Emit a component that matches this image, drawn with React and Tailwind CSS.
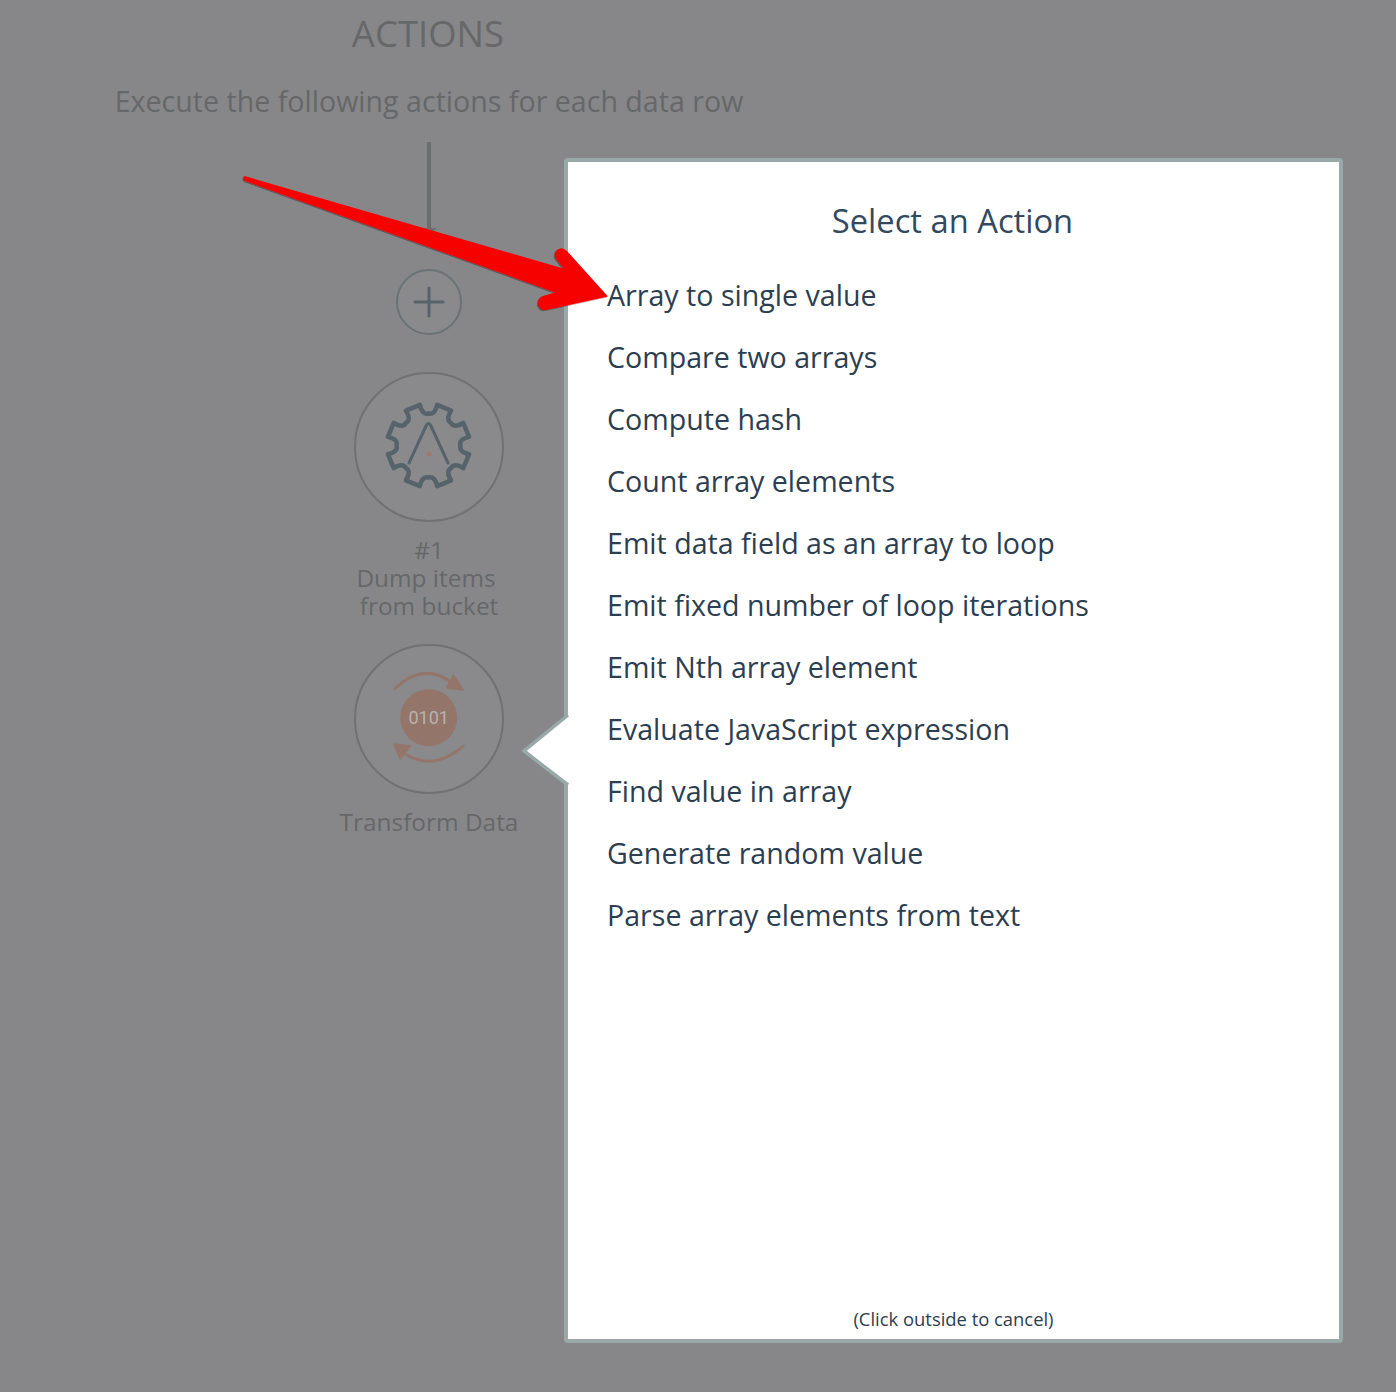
const actions = [
  'Array to single value',
  'Compare two arrays',
  'Compute hash',
  'Count array elements',
  'Emit data field as an array to loop',
  'Emit fixed number of loop iterations',
  'Emit Nth array element',
  'Evaluate JavaScript expression',
  'Find value in array',
  'Generate random value',
  'Parse array elements from text',
];

// gear outline with 8 teeth, round notches on the axes and diagonals
function gearPath(cx, cy, rOut, rIn) {
  const pt = (r, deg) => {
    const a = (deg * Math.PI) / 180;
    return `${(cx + r * Math.sin(a)).toFixed(1)} ${(cy - r * Math.cos(a)).toFixed(1)}`;
  };
  let d = `M${pt(rOut, 12)}`;
  for (let i = 0; i < 8; i++) {
    const c = i * 45;
    d += ` L${pt(rOut, c + 33)}`;
    d += ` C${pt(rIn + 2, c + 33)} ${pt(rIn - 1, c + 38)} ${pt(rIn, c + 45)}`;
    d += ` C${pt(rIn - 1, c + 52)} ${pt(rIn + 2, c + 57)} ${pt(rOut, c + 57)}`;
  }
  return d + ' Z';
}

function GearIcon() {
  return (
    <svg width="90" height="90" viewBox="0 0 90 90" fill="none" className="overflow-visible">
      <path d={gearPath(44.5, 43.5, 41.5, 32)} stroke="#56636a" strokeWidth="4.5" strokeLinejoin="round" />
      <path d="M25 61 L42 24 Q44.5 19 47 24 L64 61" stroke="#56636a" strokeWidth="3" strokeLinecap="round" strokeLinejoin="round" />
      <circle cx="45" cy="52" r="2.5" fill="#a5776a" />
    </svg>
  );
}

function TransformIcon() {
  return (
    <svg width="76" height="96" viewBox="0 0 76 96" fill="none" className="overflow-visible">
      <path d="M4 17.3 Q32 -9 60 11" stroke="#94756a" strokeWidth="3" strokeLinecap="round" />
      <path d="M62.3 4 L72.3 19 L55.7 17.3 Z" fill="#94756a" stroke="#94756a" strokeWidth="1.5" strokeLinejoin="round" />
      <circle cx="37.7" cy="46.7" r="28.5" fill="#94756a" />
      <text x="37.7" y="53" textAnchor="middle" fontFamily="Roboto, sans-serif" fontSize="18" fontWeight="400" fill="#b9b2ae">0101</text>
      <path d="M72.3 75 Q44 100 15.7 84" stroke="#94756a" strokeWidth="3" strokeLinecap="round" />
      <path d="M3 73 L19.7 75 L9 88 Z" fill="#94756a" stroke="#94756a" strokeWidth="1.5" strokeLinejoin="round" />
    </svg>
  );
}

export default function App() {
  return (
    <div className="relative h-[1392px] w-[1396px] overflow-hidden bg-[#87878a] font-['Open_Sans',sans-serif]">
      {/* dimmed flow steps behind the popup */}
      <div className="flex w-[858px] flex-col items-center pt-[10px] text-[#666768]">
        <div className="pr-[2px] text-[36.5px] leading-[46px]">ACTIONS</div>
        <div className="mt-[26px] text-[28.6px] leading-[38px]">Execute the following actions for each data row</div>
        <div className="mt-[22px] h-[86px] w-1 bg-[#6c6d6e]" />
        <div className="h-0 w-0 border-x-[8px] border-t-[6px] border-x-transparent border-t-[#6c6d6e]" />
        <div className="mt-[35px] flex h-[66px] w-[66px] items-center justify-center rounded-full border-[2px] border-[#6a7276] bg-[#8a8a8c]">
          <svg width="34" height="34" viewBox="0 0 34 34" fill="none" stroke="#56636a" strokeWidth="3" strokeLinecap="round">
            <path d="M17 3v28M3 17h28" />
          </svg>
        </div>
        <div className="mt-[37px] flex h-[150px] w-[150px] items-center justify-center rounded-full border-[2px] border-[#707171] bg-[#8a8a8c]">
          <GearIcon />
        </div>
        <div className="mt-[14px] text-center text-[24.4px] leading-[28px]">
          #1
          <br />
          <span className="pr-[6px]">Dump items</span>
          <br />
          from bucket
        </div>
        <div className="mt-[24px] flex h-[150px] w-[150px] items-center justify-center rounded-full border-[2px] border-[#707171] bg-[#8a8a8c]">
          <TransformIcon />
        </div>
        <div className="mt-[12px] text-[24.4px] leading-[32px]">Transform Data</div>
      </div>

      {/* popup */}
      <div className="absolute left-[564px] top-[158px] flex h-[1185px] w-[779px] flex-col rounded-[4px] border-[4px] border-[#99a8a8] bg-white text-[#2c3e50]">
        <div className="mt-[37px] pr-[2px] text-center text-[32.7px] leading-[44px] text-[#34495e]">Select an Action</div>
        <ul className="mt-[21px] flex flex-col pl-[39px]">
          {actions.map((a) => (
            <li key={a} className="h-[62px] text-[28.6px] leading-[62px]">{a}</li>
          ))}
        </ul>
        <div className="mt-auto pb-[6px] text-center text-[18.4px] leading-[28px]">(Click outside to cancel)</div>
        {/* pointer */}
        <svg className="absolute left-[-50px] top-[550px]" width="52" height="84" viewBox="0 0 52 84">
          <path d="M50 3 L6 39 L50 73" fill="white" stroke="#99a8a8" strokeWidth="3.5" />
        </svg>
      </div>

      {/* red annotation arrow */}
      <svg className="absolute left-0 top-0" width="700" height="340" viewBox="0 0 700 340">
        <defs>
          <filter id="s" x="-5%" y="-5%" width="110%" height="115%">
            <feDropShadow dx="-1" dy="1" stdDeviation="0.7" floodColor="#000" floodOpacity="0.35" />
          </filter>
        </defs>
        <path
          d="M244.5 176 L563.5 268.5 L556 259 Q553 253 557 250 Q562 246 567 251 L608 296.5 L546 310 Q540 311 538 305 Q537 298 543 296 L555 292.5 L245 181 Q242 178 244.5 176 Z"
          fill="#f60000"
          filter="url(#s)"
        />
      </svg>
    </div>
  );
}
